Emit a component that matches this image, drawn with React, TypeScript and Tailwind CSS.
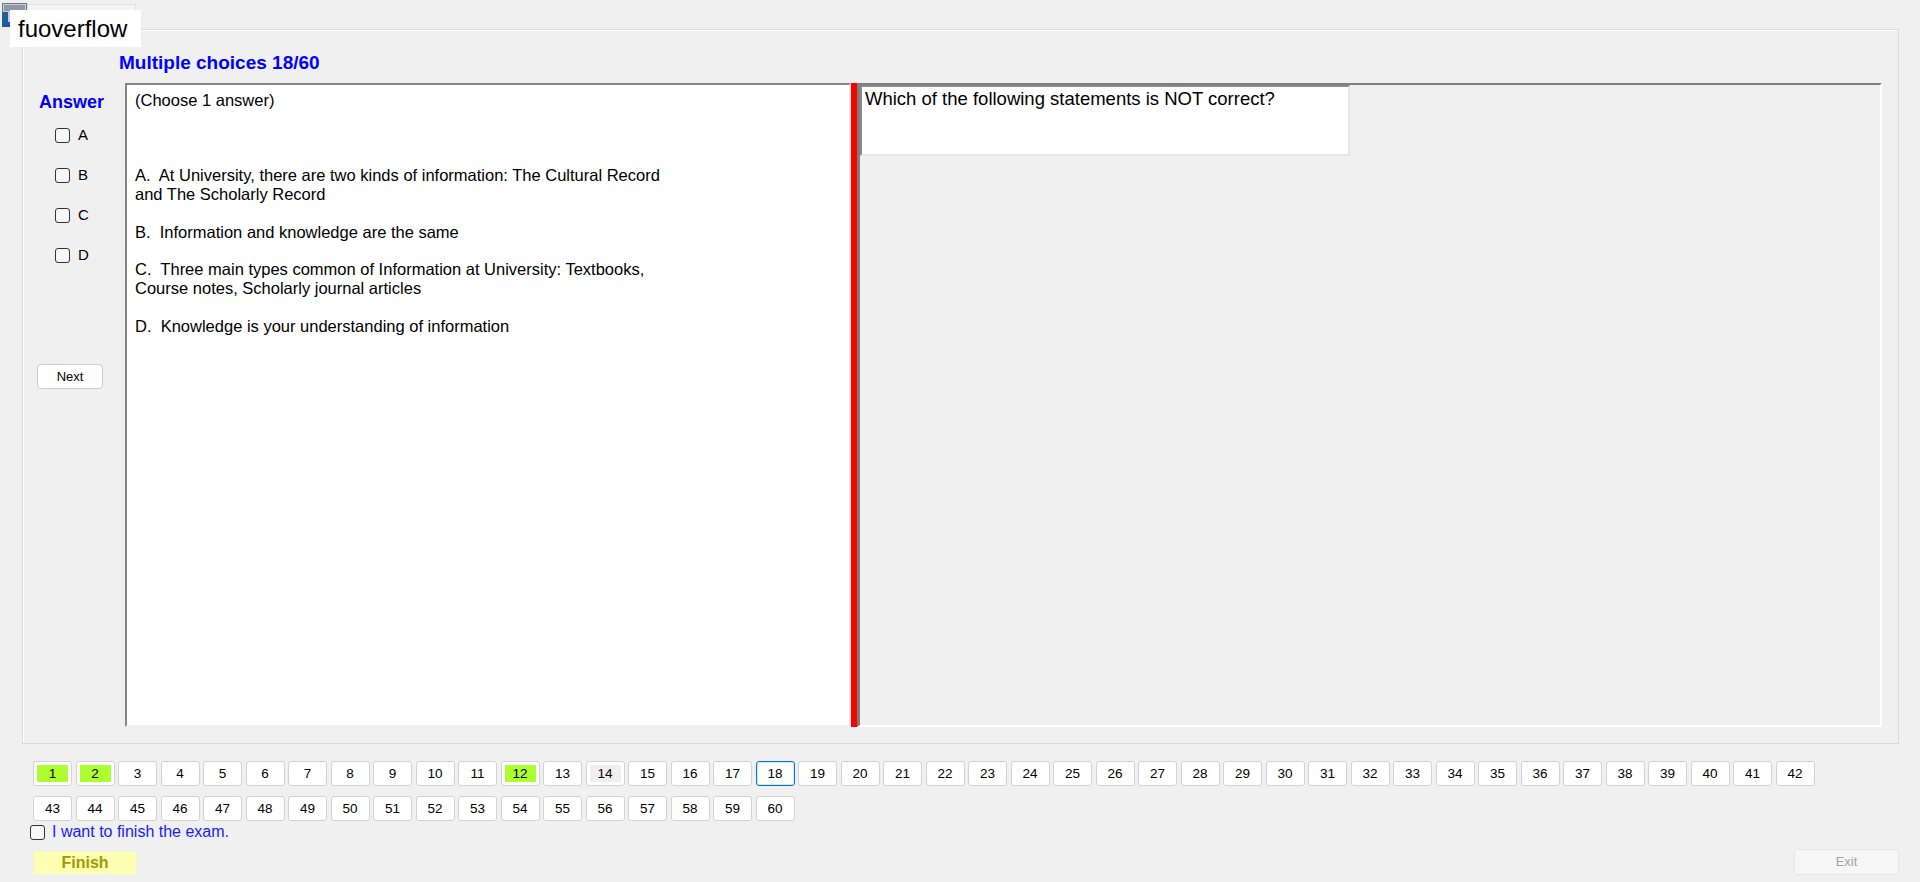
import clsx from 'clsx';

const answered = [1, 2, 12];
const visited = [14];
const current = 18;

const body = `(Choose 1 answer)



A.  At University, there are two kinds of information: The Cultural Record
and The Scholarly Record

B.  Information and knowledge are the same

C.  Three main types common of Information at University: Textbooks,
Course notes, Scholarly journal articles

D.  Knowledge is your understanding of information`;

function Box({ className }: { className?: string }) {
  return <span className={clsx('block h-[15px] w-[15px] shrink-0 rounded-[3px] border border-[#333333] bg-[#f7f7f7]', className)} />;
}

function NumButton({ n }: { n: number }) {
  const done = answered.includes(n);
  const seen = visited.includes(n);
  return (
    <div
      className={clsx(
        'flex h-[25px] w-[39px] items-center justify-center rounded-[3px] border bg-white p-[3px]',
        n === current ? 'border-[#0078d7] shadow-[inset_0_0_0_1px_#cfe6fa]' : 'border-[#d2d2d2]',
      )}
    >
      <div
        className={clsx(
          'flex h-full w-full items-center justify-center text-[13.5px] leading-none text-black',
          done && 'bg-[#adff2f]',
          seen && 'bg-[#efefef]',
        )}
      >
        {n}
      </div>
    </div>
  );
}

export default function App() {
  return (
    <div className="relative h-[882px] w-[1920px] overflow-hidden bg-[#f0f0f0] font-['Liberation_Sans',Arial,sans-serif] text-black">
      {/* window icon + watermark label over the group box */}
      <svg className="absolute left-[2px] top-[3px]" width="25" height="24" viewBox="0 0 25 24">
        <rect x="0.5" y="0.5" width="24" height="23" fill="#c9ced4" stroke="#6d7782" />
        <rect x="2" y="2" width="21" height="6" fill="#8e99a5" />
        <rect x="0" y="9" width="6" height="15" fill="#1f5d9c" />
        <rect x="0" y="19" width="25" height="5" fill="#1f5d9c" />
      </svg>
      <div className="absolute left-[27px] top-[4px] h-[30px] w-[109px] border border-[#e2e2e2] bg-[#f4f4f4]" />
      <div className="absolute left-[10px] top-[10px] flex h-[37px] w-[131px] items-center bg-white pl-[8px] text-[24px] leading-none">
        fuoverflow
      </div>

      <div className="ml-[22px] mt-[29px] flex h-[715px] w-[1877px] flex-col border border-[#dadada] shadow-[inset_1px_1px_0_#ffffff]">
        <div className="h-[53px] shrink-0 pl-[96px] pt-[22px] text-[19px] font-bold leading-[22px] text-[#0000ff]">
          Multiple choices 18/60
        </div>

        <div className="flex h-[644px]">
          <div className="w-[102px] shrink-0">
            <div className="pl-[16px] pt-[9px] text-[18px] font-bold leading-[21px] text-[#0000ff]">Answer</div>
            <div className="mt-[2px] flex flex-col pl-[32px]">
              {['A', 'B', 'C', 'D'].map((l) => (
                <label key={l} className="flex h-[40px] items-center gap-[8px] text-[15px]">
                  <Box />
                  {l}
                </label>
              ))}
            </div>
            <button className="ml-[14px] mt-[89px] flex h-[25px] w-[66px] items-center justify-center rounded-[4px] border border-[#cccccc] bg-white text-[13px] text-black">
              Next
            </button>
          </div>

          <div className="flex flex-1 pr-[16px]">
            <div className="w-[726px] shrink-0 border-b-2 border-l-2 border-r-2 border-t-2 border-b-[#f0f0f0] border-l-[#858585] border-r-[#ececec] border-t-[#858585] bg-white">
              <div className="whitespace-pre pl-[8px] pt-[6px] text-[16.5px] leading-[18.8px]">{body}</div>
            </div>
            <div className="w-[6px] shrink-0 bg-[#ff0000]" />
            <div className="flex-1 border-b-2 border-l-[3px] border-r-2 border-t-2 border-b-[#ffffff] border-l-[#7d7d7d] border-r-[#ffffff] border-t-[#7d7d7d] bg-[#f0f0f0]">
              <div className="h-[71px] w-[490px] border-b-2 border-l-2 border-r-2 border-t-2 border-b-[#e6e6e6] border-l-[#8a8a8a] border-r-[#e6e6e6] border-t-[#8a8a8a] bg-white pl-[3px] pt-[1px] text-[18.5px] leading-[21px]">
                Which of the following statements is NOT correct?
              </div>
            </div>
          </div>
        </div>
      </div>

      <div className="pl-[33px] pt-[17px]">
        <div className="flex w-[1782px] flex-wrap gap-x-[3.5px] gap-y-[10px]">
          {Array.from({ length: 60 }, (_, i) => (
            <NumButton key={i + 1} n={i + 1} />
          ))}
        </div>
        <label className="ml-[-3px] mt-[2px] flex h-[18px] items-center gap-[7px] text-[16px] text-[#1a1aff]">
          <Box />
          <span>I want to finish the exam.</span>
        </label>
      </div>

      <div className="flex items-end justify-between pl-[33px] pr-[21px] pt-[8px]">
        <button className="flex h-[24px] w-[104px] items-center justify-center rounded-[2px] border border-[#f3f3d8] bg-[#ffffb4] text-[16px] font-bold text-[#9b9b00]">
          Finish
        </button>
        <button className="flex h-[26px] w-[105px] items-center justify-center rounded-[3px] border border-[#e6e6e6] bg-[#f6f6f6] text-[13px] text-[#a3a3a3]">
          Exit
        </button>
      </div>
    </div>
  );
}
